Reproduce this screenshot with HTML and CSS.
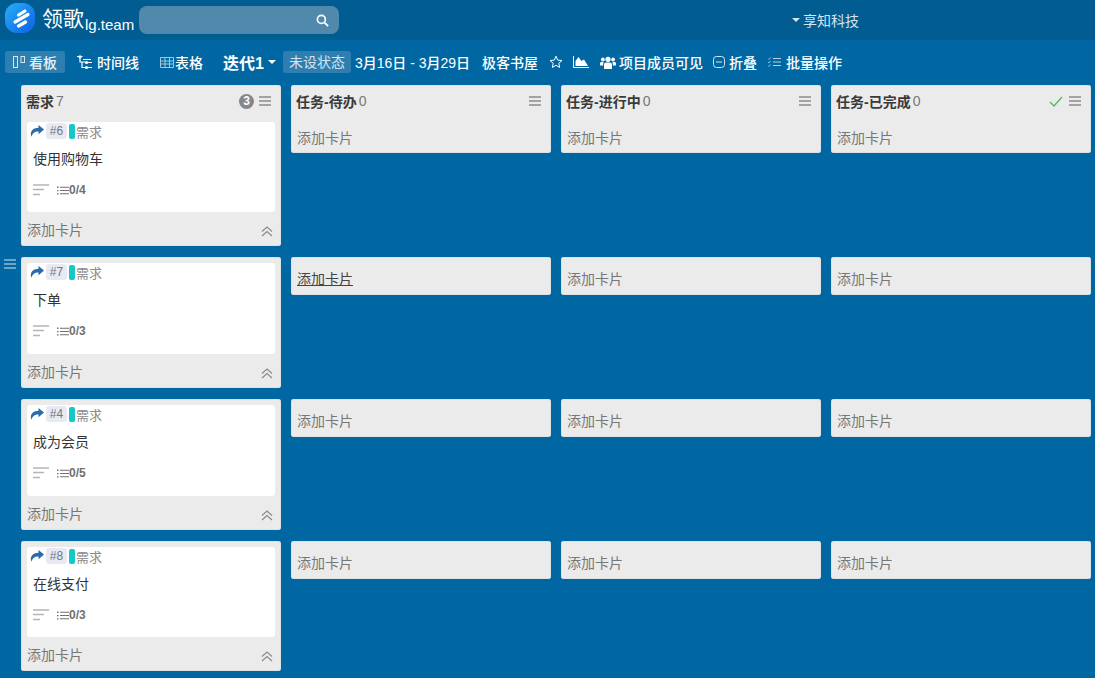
FILE: index.html
```html
<!DOCTYPE html>
<html lang="zh">
<head>
<meta charset="utf-8">
<title>领歌 看板</title>
<link rel="stylesheet" href="styles.css">
</head>
<body>
<svg class="defs" width="0" height="0">
  <symbol id="share" viewBox="0 0 14 12"><path d="M8.500 0 14 4.600 8.500 9.200V6.400C5 6.300 2.600 7.700 1.300 11.800-.4 6.800 2.800 2.900 8.500 2.800Z" fill="#2a6cab"/></symbol>
  <symbol id="menu" viewBox="0 0 12 10"><path d="M0 1h12M0 5h12M0 9h12" stroke="currentColor" stroke-width="1.400" fill="none"/></symbol>
  <symbol id="desc" viewBox="0 0 16 12"><path d="M0 1h16M0 5.500h11M0 10.500h7" stroke="#b5b5b5" stroke-width="1.300" fill="none"/></symbol>
  <symbol id="list" viewBox="0 0 12 9"><path d="M3 1.200h9M3 4.500h9M3 7.800h9" stroke="#707070" stroke-width="1.100" fill="none"/><path d="M0 .6h1.500v1.300H0zM0 3.900h1.500v1.300H0zM0 7.200h1.500v1.300H0z" fill="#707070"/></symbol>
  <symbol id="up" viewBox="0 0 12 11"><path d="M1 5.500 6 1l5 4.500M1 10 6 5.500 11 10" stroke="#8a8a8a" stroke-width="1.200" fill="none"/></symbol>
</svg>
<header class="topbar">
  <div class="brand">
    <svg class="logo" viewBox="0 0 32 32" width="32" height="32">
      <defs><linearGradient id="lg" x1="0" y1="0" x2="1" y2="1"><stop offset="0" stop-color="#27b0f7"/><stop offset="1" stop-color="#0d5fe6"/></linearGradient></defs>
      <rect x="1" y="1" width="30" height="30" rx="12" fill="url(#lg)"/>
      <path d="M14.500 13 21 9M11 20 24 12.500M14.500 24 21.500 20" stroke="#fff" stroke-width="3.200" stroke-linecap="round" fill="none"/>
    </svg>
    <span class="brand-name">领歌</span><span class="brand-domain">lg.team</span>
  </div>
  <div class="search">
    <svg viewBox="0 0 14 14" width="13" height="13"><circle cx="5.800" cy="5.800" r="4.300" fill="none" stroke="#fff" stroke-width="1.800"/><path d="M9 9l4 4" stroke="#fff" stroke-width="2"/></svg>
  </div>
  <div class="org"><span class="caret small"></span>享知科技</div>
</header>
<nav class="toolbar">
  <a class="tool active">
    <svg viewBox="0 0 12 12" width="12" height="12"><rect x=".5" y=".5" width="4" height="11" fill="none" stroke="#d5e6f2"/><rect x="8" y=".5" width="3.500" height="6" fill="none" stroke="#d5e6f2"/></svg>看板</a>
  <a class="tool timeline">
    <svg viewBox="0 0 16 15" width="16" height="15"><path d="M0 1.500h5.500M3 2v5h5M8 12.500H5V7M6 4.500h8M11 7.500h4M11 12.500h4" stroke="#fff" stroke-width="1.200" fill="none"/><circle cx="3" cy="1.800" r="1.600" fill="#fff"/><circle cx="9.500" cy="7.500" r="1.600" fill="#fff"/><circle cx="9.500" cy="12.500" r="1.600" fill="#fff"/></svg>时间线</a>
  <a class="tool table">
    <svg viewBox="0 0 14 11" width="14" height="11"><path d="M.5.500h13v10H.5zM.5 4h13M.5 7h13M5 .5v10M9.500.5v10" stroke="#b4d1e4" stroke-width=".9" fill="none"/></svg>表格</a>
  <a class="iter">迭代1<span class="caret"></span></a>
  <a class="status">未设状态</a>
  <span class="plain date">3月16日 - 3月29日</span>
  <span class="plain project">极客书屋</span>
  <svg class="star" viewBox="0 0 14 14" width="14" height="14"><path d="M7 1.200 8.700 5.100 13 5.500 9.800 8.300 10.700 12.500 7 10.300 3.300 12.500 4.200 8.300 1 5.500 5.300 5.100Z" fill="none" stroke="#fff" stroke-width="1"/></svg>
  <svg class="chart" viewBox="0 0 16 12" width="16" height="12"><path d="M.5 0v11.500H16" stroke="#fff" fill="none"/><path d="M2.500 10V5l3-4 3 4 2.500-1.500L15 10z" fill="#fff"/></svg>
  <svg class="group" viewBox="0 0 16 13" width="16" height="13"><g fill="#fff"><circle cx="8" cy="3.300" r="2.600"/><circle cx="2.900" cy="3.500" r="1.900"/><circle cx="13.100" cy="3.500" r="1.900"/><path d="M4 13V8.500Q4 6.500 6 6.500h4Q12 6.500 12 8.500V13Z"/><path d="M0 9.500V7Q0 6 1.500 6H3.500L3 9.500ZM16 9.500V7Q16 6 14.500 6H12.500L13 9.500Z"/></g></svg>
  <span class="plain vis">项目成员可见</span>
  <svg class="fold" viewBox="0 0 12 12" width="12" height="12"><rect x=".5" y=".5" width="11" height="11" rx="3" fill="none" stroke="#d5e6f2"/><path d="M3 6h6" stroke="#d5e6f2"/></svg>
  <span class="plain">折叠</span>
  <svg class="batch" viewBox="0 0 13 10" width="13" height="10"><path d="M5 1.500h8M5 5h8M5 8.500h8" stroke="#b4d1e4" fill="none"/><path d="M0 1.500 1 2.500 2.500.5M0 5 1 6 2.500 4M0 8.500 1 9.500 2.500 7.500" stroke="#b4d1e4" stroke-width=".8" fill="none"/></svg>
  <span class="plain">批量操作</span>
</nav>
<main class="board">
  <svg class="row-handle" viewBox="0 0 12 10" width="12" height="10"><use href="#menu"/></svg>
  <section class="row first">
    <div class="col">
      <div class="col-head"><strong>需求</strong><em>7</em><span class="spacer"></span><span class="badge">3</span><svg class="menu" width="12" height="10"><use href="#menu"/></svg></div>
      <article class="card">
        <div class="meta"><svg class="share" width="14" height="12"><use href="#share"/></svg><span class="num">#6</span><i class="tag"></i><span class="type">需求</span></div>
        <div class="title">使用购物车</div>
        <div class="foot"><svg width="16" height="12"><use href="#desc"/></svg><svg class="li" width="12" height="9"><use href="#list"/></svg><span>0/4</span></div>
      </article>
      <div class="add has-up">添加卡片<svg width="12" height="11"><use href="#up"/></svg></div>
    </div>
    <div class="col">
      <div class="col-head"><strong>任务-待办</strong><em>0</em><span class="spacer"></span><svg class="menu" width="12" height="10"><use href="#menu"/></svg></div>
      <div class="add">添加卡片</div>
    </div>
    <div class="col">
      <div class="col-head"><strong>任务-进行中</strong><em>0</em><span class="spacer"></span><svg class="menu" width="12" height="10"><use href="#menu"/></svg></div>
      <div class="add">添加卡片</div>
    </div>
    <div class="col">
      <div class="col-head"><strong>任务-已完成</strong><em>0</em><span class="spacer"></span><svg class="check" viewBox="0 0 14 11" width="14" height="11"><path d="M1 6l4 4 8-9" stroke="#5cb85c" stroke-width="1.400" fill="none"/></svg><svg class="menu" width="12" height="10"><use href="#menu"/></svg></div>
      <div class="add">添加卡片</div>
    </div>
  </section>
  <section class="row">
    <div class="col">
      <article class="card">
        <div class="meta"><svg class="share" width="14" height="12"><use href="#share"/></svg><span class="num">#7</span><i class="tag"></i><span class="type">需求</span></div>
        <div class="title">下单</div>
        <div class="foot"><svg width="16" height="12"><use href="#desc"/></svg><svg class="li" width="12" height="9"><use href="#list"/></svg><span>0/3</span></div>
      </article>
      <div class="add has-up">添加卡片<svg width="12" height="11"><use href="#up"/></svg></div>
    </div>
    <div class="col"><div class="add hover">添加卡片</div></div>
    <div class="col"><div class="add">添加卡片</div></div>
    <div class="col"><div class="add">添加卡片</div></div>
  </section>
  <section class="row">
    <div class="col">
      <article class="card">
        <div class="meta"><svg class="share" width="14" height="12"><use href="#share"/></svg><span class="num">#4</span><i class="tag"></i><span class="type">需求</span></div>
        <div class="title">成为会员</div>
        <div class="foot"><svg width="16" height="12"><use href="#desc"/></svg><svg class="li" width="12" height="9"><use href="#list"/></svg><span>0/5</span></div>
      </article>
      <div class="add has-up">添加卡片<svg width="12" height="11"><use href="#up"/></svg></div>
    </div>
    <div class="col"><div class="add">添加卡片</div></div>
    <div class="col"><div class="add">添加卡片</div></div>
    <div class="col"><div class="add">添加卡片</div></div>
  </section>
  <section class="row last">
    <div class="col">
      <article class="card">
        <div class="meta"><svg class="share" width="14" height="12"><use href="#share"/></svg><span class="num">#8</span><i class="tag"></i><span class="type">需求</span></div>
        <div class="title">在线支付</div>
        <div class="foot"><svg width="16" height="12"><use href="#desc"/></svg><svg class="li" width="12" height="9"><use href="#list"/></svg><span>0/3</span></div>
      </article>
      <div class="add has-up">添加卡片<svg width="12" height="11"><use href="#up"/></svg></div>
    </div>
    <div class="col"><div class="add">添加卡片</div></div>
    <div class="col"><div class="add">添加卡片</div></div>
    <div class="col"><div class="add">添加卡片</div></div>
  </section>
</main>
</body>
</html>
```
FILE: styles.css
```css
* { box-sizing: border-box; }
html, body { margin: 0; height: 100%; }
body {
  width: 1095px; height: 678px; overflow: hidden;
  background: #0067a3;
  font-family: "Liberation Sans", "Noto Sans CJK SC", sans-serif;
  font-size: 13px; color: #333;
}
.defs { position: absolute; }
.topbar {
  height: 40px; background: #005c91; display: flex; align-items: center;
  padding-left: 4px; color: #fff;
}
.brand { display: flex; align-items: center; width: 135px; }
.logo { flex: none; margin: 0 6px 4px 0; }
.brand-name { font-size: 21px; line-height: 30px; margin-bottom: 2px; }
.brand-domain { font-size: 15px; margin: 9px 0 0 1px; white-space: nowrap; }
.search {
  width: 200px; height: 28px; border-radius: 8px; background: #5189ac;
  display: flex; align-items: center; justify-content: flex-end; padding-right: 10px;
}
.org { margin-left: 453px; color: #d5e4ee; font-size: 14px; display: flex; align-items: center; }
.caret {
  display: inline-block; border-left: 4px solid transparent; border-right: 4px solid transparent;
  border-top: 4px solid #fff; margin-left: 4px;
}
.caret.small { margin: 0 3px 0 0; border-top-color: #d5e4ee; }
.toolbar {
  height: 44px; display: flex; align-items: center; padding-left: 5px; color: #fff;
  font-size: 14px; font-weight: 500;
}
.tool { display: flex; align-items: center; white-space: nowrap; }
.tool.active { background: #2f7eb0; width: 60px; height: 22px; border-radius: 3px; padding-left: 8px; gap: 4px; color: #e6f0f6; }
.tool.timeline { margin-left: 12px; gap: 4px; }
.tool.table { margin-left: 21px; gap: 1px; }
.iter { margin-left: 20px; font-size: 16px; font-weight: 700; display: flex; align-items: center; white-space: nowrap; }
.status { margin-left: 7px; background: #2f7eb0; color: #d5e4ee; height: 22px; line-height: 22px; padding: 0 6px; border-radius: 3px; white-space: nowrap; font-weight: 400; }
.plain { white-space: nowrap; }
.date { margin-left: 4px; }
.project { margin-left: 12px; }
.star { margin-left: 11px; }
.chart { margin-left: 10px; }
.group { margin-left: 11px; }
.vis { margin-left: 3px; }
.fold { margin-left: 10px; margin-right: 4px; }
.batch { margin-left: 11px; margin-right: 5px; }
.board { position: relative; padding: 1px 4px 0 21px; display: flex; flex-direction: column; gap: 11px; }
.row-handle { position: absolute; left: 4px; top: 175px; color: #8fbcd8; }
.row { display: grid; grid-template-columns: repeat(4, 260px); gap: 10px; align-items: start; }
.col { background: #ebebeb; border-radius: 3px; box-shadow: 0 0 0 .5px #cfd9df inset; }
.col-head { height: 30px; display: flex; align-items: center; padding: 2px 10px 0 5px; }
.col-head strong { font-size: 14px; font-weight: 700; color: #3a3a3a; }
.col-head em { font-style: normal; font-size: 14px; color: #777; margin-left: 2px; }
.spacer { flex: 1; }
.menu { color: #8c8c8c; margin-left: 5px; flex: none; }
.badge { width: 15px; height: 15px; border-radius: 50%; background: #85878b; color: #fff; font-size: 12px; font-weight: 700; text-align: center; line-height: 15px; }
.check { margin-right: 1px; }
.card { margin: 6px 6px 0; background: #fff; border-radius: 3px; padding: 1px 3px 0; height: 91px; }
.first .card { margin-top: 7px; height: 90px; }
.last .card { height: 90px; }
.meta { display: flex; align-items: center; height: 18px; margin-top: -1px; }
.share { flex: none; }
.num { margin-left: 2px; background: #e8eaf3; color: #777; font-size: 12px; line-height: 16px; width: 21px; text-align: center; border-radius: 3px; }
.tag { width: 6px; height: 15px; background: #14c8c8; border-radius: 2px; margin-left: 2px; }
.type { color: #8a8a8a; font-size: 13px; margin-left: 1px; }
.title { font-size: 14px; line-height: 20px; color: #333; margin: 9px 0 0 3px; }
.foot { display: flex; align-items: center; margin: 13px 0 0 3px; color: #707070; font-size: 12px; font-weight: 700; height: 16px; }
.li { margin-left: 8px; }
.add { height: 38px; padding: 4px 6px 0; display: flex; align-items: center; color: #777; font-size: 14px; }
.first .add { padding-top: 6px; }
.add.has-up { justify-content: space-between; padding: 0 8px 0 6px; height: 34px; }
.hover { text-decoration: underline; color: #444; }
.add.has-up svg { margin-top: 4px; }
```
